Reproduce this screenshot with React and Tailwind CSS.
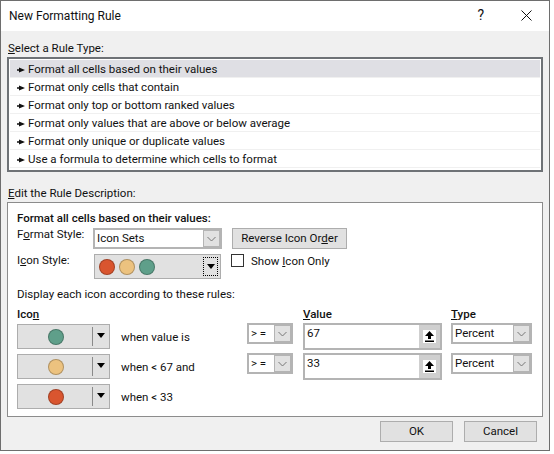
import React from "react";

const ruleTypes = [
  "Format all cells based on their values",
  "Format only cells that contain",
  "Format only top or bottom ranked values",
  "Format only values that are above or below average",
  "Format only unique or duplicate values",
  "Use a formula to determine which cells to format",
];

const RED = "bg-[#d9552f]";
const YELLOW = "bg-[#ecc27f]";
const GREEN = "bg-[#5f9f8a]";

function Dot({ color }) {
  return <span className={`block w-4 h-4 rounded-full border border-black/25 ${color}`} />;
}

function RuleArrow() {
  return (
    <svg width="8" height="6" viewBox="0 0 8 6" className="shrink-0">
      <path d="M0 2.2h2V0.5l6 2.5-6 2.5V3.8H0z" fill="#111" />
    </svg>
  );
}

function Select({ value, className }) {
  return (
    <div className={`flex items-start justify-between h-[21px] border-2 border-[#b4b4b4] bg-white pl-[2px] ${className}`}>
      <span className="leading-[17px]">{value}</span>
      <span className="flex items-center justify-center w-[17px] h-[17px] bg-[#e1e1e1] border border-[#b4b4b4]">
        <svg width="9" height="6" viewBox="0 0 9 6">
          <path d="M0.5 1l4 4 4-4" fill="none" stroke="#777" />
        </svg>
      </span>
    </div>
  );
}

function IconCombo({ color }) {
  return (
    <div className="flex items-center w-[93px] h-[25px] mt-px bg-[#e1e1e1] border border-[#adadad]">
      <span className="flex justify-center w-[74px] pl-[1px]">
        <Dot color={color} />
      </span>
      <span className="w-px h-[19px] bg-[#8a8a8a]" />
      <span className="flex justify-center w-[15px] pb-[3px]">
        <svg width="8" height="5" viewBox="0 0 8 5">
          <path d="M0 0h8L4 5z" fill="#000" />
        </svg>
      </span>
    </div>
  );
}

function ValueInput({ value }) {
  return (
    <div className="flex justify-between w-[139px] h-[27px] border-2 border-[#b4b4b4] bg-white pl-[2px]">
      <span className="leading-[17px]">{value}</span>
      <span className="flex items-center justify-center w-[21px] bg-[#cfcfcf]">
        <span className="flex items-center justify-center w-[13px] h-[13px] bg-white">
          <svg width="11" height="11" viewBox="0 0 11 11">
            <path d="M5.5 0L10 5H7v3H4V5H1zM1 9.5h9V11H1z" fill="#000" />
          </svg>
        </span>
      </span>
    </div>
  );
}

function Button({ className, children }) {
  return (
    <div className={`flex items-center justify-center h-[21px] bg-[#e1e1e1] border border-[#adadad] ${className}`}>
      {children}
    </div>
  );
}

export default function App() {
  return (
    <div className="w-[554px] h-[454px] bg-white overflow-hidden text-[11.5px] text-[#111] [font-family:Roboto,sans-serif]">
      <div className="flex flex-col w-[550px] h-[451px] border border-[#6e6e6e]">
        {/* Title bar */}
        <div className="flex items-center justify-between h-[30px] shrink-0 bg-white pl-[8px] pr-[17px]">
          <span className="text-[12px]">New Formatting Rule</span>
          <div className="flex items-center gap-[37px] pb-[2px]">
            <span className="text-[14px] leading-none">?</span>
            <svg width="11" height="11" viewBox="0 0 11 11">
              <path d="M0.5 0.5l10 10M10.5 0.5l-10 10" stroke="#111" fill="none" />
            </svg>
          </div>
        </div>

        <div className="flex flex-col flex-1 bg-[#f0f0f0] px-[6px]">
          <div className="h-[26px] pt-[9px] pl-px leading-[16px]">
            <u>S</u>elect a Rule Type:
          </div>

          {/* Rule type list */}
          <div className="h-[115px] border-2 border-[#6e7276] bg-white p-px">
            {ruleTypes.map((rule, i) => (
              <div
                key={rule}
                className={`flex items-center gap-[3px] h-[18px] pl-[7px] pt-[2px] border-b border-[#f0f0f0] ${i === 0 ? "bg-[#dfdfe4]" : ""}`}
              >
                <RuleArrow />
                <span>{rule}</span>
              </div>
            ))}
          </div>

          <div className="h-[30px] pt-[13px] pl-px leading-[16px]">
            <u>E</u>dit the Rule Description:
          </div>

          {/* Rule description */}
          <div className="flex flex-col h-[215px] border border-[#8c8c8c] bg-white pl-[9px]">
            <div className="mt-[7px] h-[16px] leading-[16px] font-medium">Format all cells based on their values:</div>

            <div className="flex mt-[2px] h-[21px]">
              <div className="w-[76px] leading-[13px]">
                F<u>o</u>rmat Style:
              </div>
              <Select value="Icon Sets" className="w-[129px]" />
              <Button className="w-[115px] ml-[10px]">
                Reverse Icon Or<u>d</u>er
              </Button>
            </div>

            <div className="flex mt-[5px] h-[25px]">
              <div className="w-[77px] leading-[13px]">
                I<u>c</u>on Style:
              </div>
              <div className="flex items-center justify-between w-[127px] bg-[#e1e1e1] border border-[#adadad] pl-[4px] pr-[2px]">
                <div className="flex gap-[4px]">
                  <Dot color={RED} />
                  <Dot color={YELLOW} />
                  <Dot color={GREEN} />
                </div>
                <span className="flex items-center justify-center w-[15px] h-[19px] border border-dotted border-black">
                  <svg width="8" height="5" viewBox="0 0 8 5">
                    <path d="M0 0h8L4 5z" fill="#000" />
                  </svg>
                </span>
              </div>
              <div className="flex items-start ml-[10px]">
                <span className="w-[13px] h-[13px] border border-[#333] bg-white" />
                <span className="ml-[7px] leading-[14px]">
                  Show <u>I</u>con Only
                </span>
              </div>
            </div>

            <div className="mt-[7px] h-[16px] leading-[16px]">Display each icon according to these rules:</div>

            {/* Icon rules */}
            <div className="grid grid-cols-[104px_126px_56px_148px_81px] grid-rows-[17px_30px_30px_30px] mt-[4px]">
              <div className="leading-[16px] font-medium">
                Ico<u>n</u>
              </div>
              <div />
              <div />
              <div className="leading-[16px] font-medium">
                <u>V</u>alue
              </div>
              <div className="leading-[16px] font-medium">
                <u>T</u>ype
              </div>

              <IconCombo color={GREEN} />
              <div className="pt-[6px] leading-[16px]">when value is</div>
              <Select value="> =" className="w-[46px]" />
              <ValueInput value="67" />
              <Select value="Percent" className="w-[81px]" />

              <IconCombo color={YELLOW} />
              <div className="pt-[6px] leading-[16px]">{"when < 67 and"}</div>
              <Select value="> =" className="w-[46px]" />
              <ValueInput value="33" />
              <Select value="Percent" className="w-[81px]" />

              <IconCombo color={RED} />
              <div className="pt-[6px] leading-[16px]">{"when < 33"}</div>
            </div>
          </div>

          <div className="flex justify-end gap-[11px] pt-[4px] pr-[6px]">
            <Button className="w-[73px]">OK</Button>
            <Button className="w-[73px]">Cancel</Button>
          </div>
        </div>
      </div>
    </div>
  );
}
